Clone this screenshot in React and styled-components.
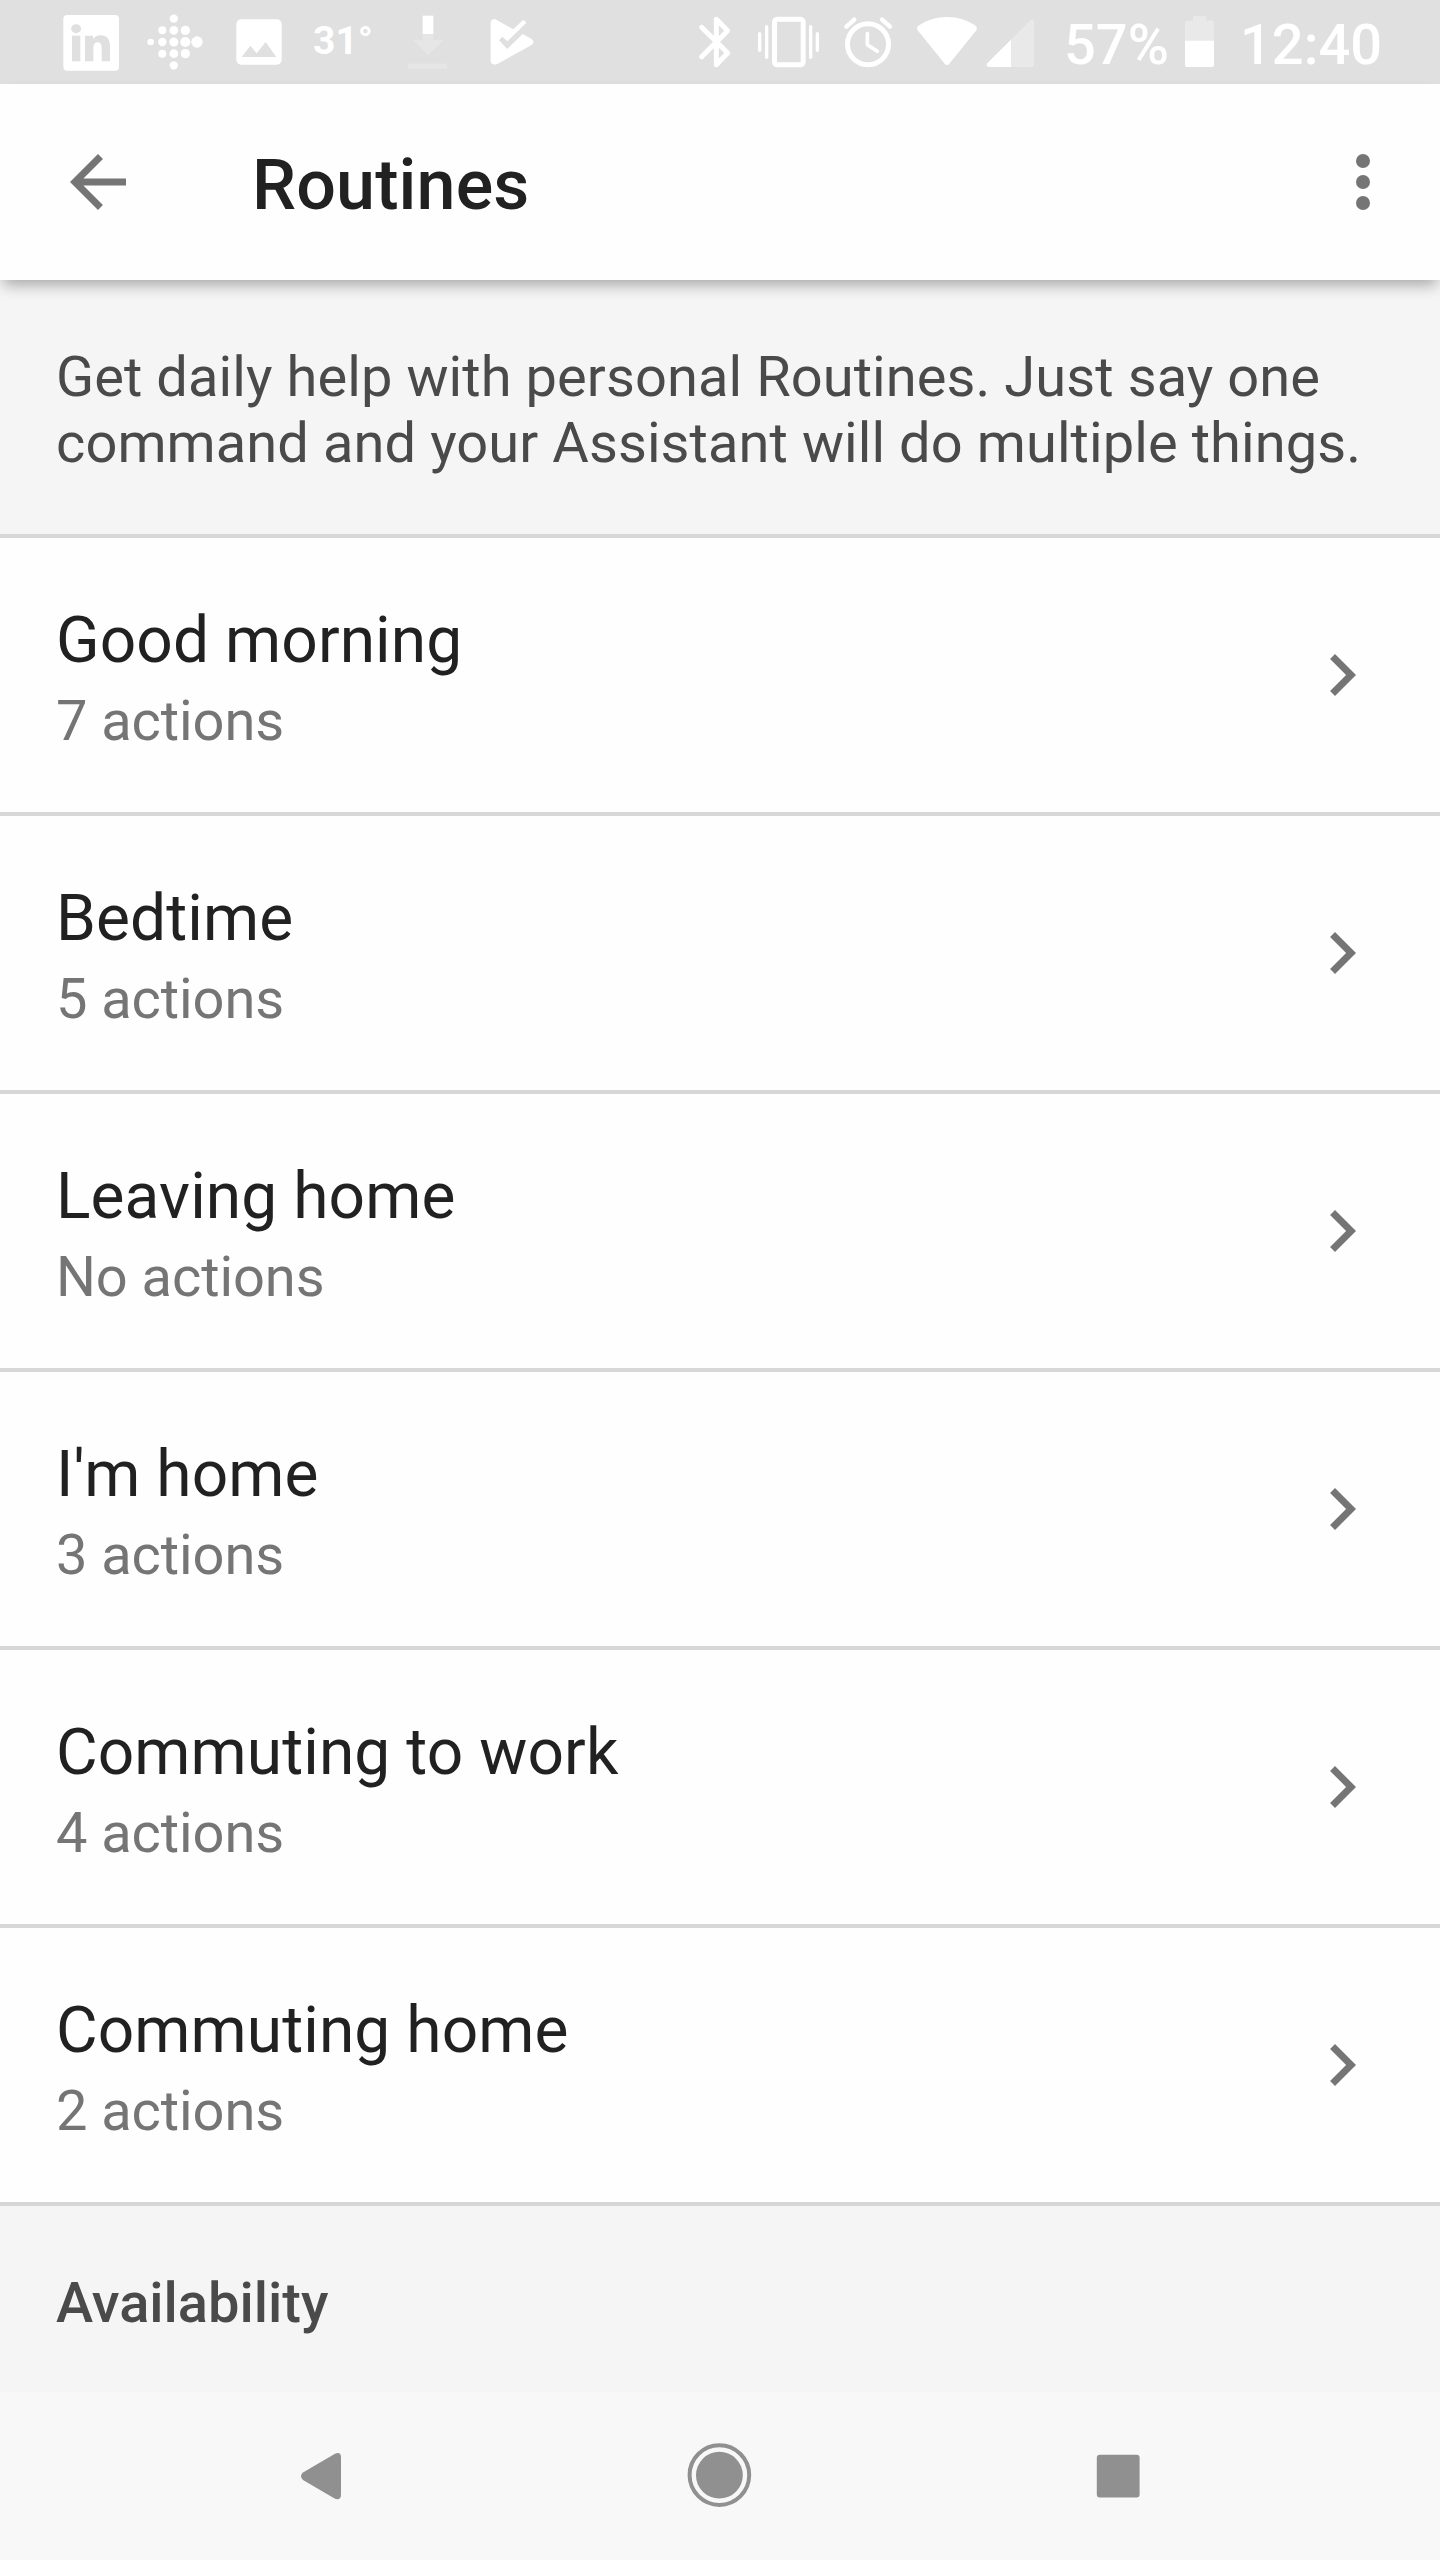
import React from "react";
import styled, { createGlobalStyle } from "styled-components";

const GlobalStyle = createGlobalStyle`
  *, *::before, *::after { box-sizing: border-box; }
  body {
    margin: 0;
    background: #fefefe;
    font-family: Roboto, "Liberation Sans", sans-serif;
  }
`;

const Screen = styled.div`
  display: flex;
  flex-direction: column;
  width: 1440px;
  height: 2560px;
  overflow: hidden;
  background: #fefefe;
`;

const StatusBar = styled.div`
  flex: none;
  display: flex;
  justify-content: space-between;
  height: 84px;
  padding: 0 54px 0 60px;
  background: #e0e0e0;
  color: #fff;
`;

const StatusGroup = styled.div`
  display: flex;
`;

const Glyph = styled.svg`
  flex: none;
  display: block;
  width: ${(p) => p.$w}px;
  height: 84px;
  margin-left: ${(p) => p.$gap || 0}px;
  fill: #fff;
`;

const StatusText = styled.span`
  flex: none;
  width: ${(p) => p.$w}px;
  margin-left: ${(p) => p.$gap}px;
  padding-top: ${(p) => p.$top}px;
  font-size: ${(p) => p.$size}px;
  font-weight: ${(p) => p.$weight || 500};
  line-height: 66px;
  white-space: nowrap;
`;

const Toolbar = styled.header`
  flex: none;
  position: relative;
  z-index: 1;
  display: flex;
  align-items: center;
  height: 196px;
  padding: 0 35px 0 56px;
  background: #fefefe;
  box-shadow: 0 8px 14px -3px rgba(0, 0, 0, 0.32);
`;

const IconButton = styled.button`
  display: block;
  width: 84px;
  height: 84px;
  padding: 0;
  border: 0;
  background: none;
`;

const ActionIcon = styled.svg`
  flex: none;
  display: block;
  width: 84px;
  height: 84px;
  fill: #757575;
`;

const Title = styled.h1`
  flex: 1;
  margin: 0;
  padding: 6px 0 0 112px;
  color: #212121;
  font-size: 70px;
  font-weight: 500;
  letter-spacing: 0.15px;
  line-height: 82px;
`;

const Intro = styled.p`
  flex: none;
  height: 258px;
  margin: 0;
  padding: 64px 0 0 56px;
  border-bottom: 4px solid #d7d7d7;
  background: #f5f5f5;
  color: #4a4a4a;
  font-size: 56px;
  letter-spacing: 0.08px;
  line-height: 66px;
  white-space: nowrap;
`;

const List = styled.ul`
  flex: none;
  margin: 0;
  padding: 0;
  list-style: none;
`;

const Row = styled.li`
  display: flex;
  justify-content: space-between;
  align-items: center;
  height: 278px;
  padding: 0 56px;
  border-bottom: 4px solid #d7d7d7;
`;

const RowText = styled.div`
  display: flex;
  flex-direction: column;
  gap: 10px;
  padding-top: 8px;
`;

const RowTitle = styled.span`
  color: #212121;
  font-size: 64px;
  letter-spacing: 0.1px;
  line-height: 74px;
`;

const RowMeta = styled.span`
  color: #757575;
  font-size: 56px;
  letter-spacing: -0.08px;
  line-height: 66px;
`;

const SectionHeader = styled.h2`
  flex: 1;
  margin: 0;
  padding: 64px 56px 0;
  background: #f5f5f5;
  color: #4a4a4a;
  font-size: 56px;
  font-weight: 500;
  line-height: 66px;
`;

const NavBar = styled.nav`
  flex: none;
  display: flex;
  align-items: center;
  height: 168px;
  padding: 0 122px 0 121px;
  background: #f8f8f8;
`;

const NavButton = styled.div`
  flex: 1;
  display: flex;
  justify-content: center;
`;

const NavIcon = styled.svg`
  display: block;
  width: 83px;
  height: 84px;
  fill: #909090;
`;

const fitbitDots = [
  [332, 126, 10],
  [367, 91, 12], [367, 126, 12.5], [367, 161, 12],
  [401.5, 56, 12.5], [401.5, 91, 13], [401.5, 126, 13.5], [401.5, 161, 13], [401.5, 196, 12.5],
  [436, 91, 14], [436, 126, 15], [436, 161, 14],
  [471, 126, 17],
];

const routines = [
  ["Good morning", "7 actions"],
  ["Bedtime", "5 actions"],
  ["Leaving home", "No actions"],
  ["I'm home", "3 actions"],
  ["Commuting to work", "4 actions"],
  ["Commuting home", "2 actions"],
];

function NotificationIcons() {
  return (
    <StatusGroup>
      <Glyph $w={62} viewBox="60 0 186 252">
        <rect x="70" y="45" width="167" height="167" rx="12" />
        <g fill="#e0e0e0">
          <ellipse cx="108.5" cy="86" rx="15" ry="13.5" />
          <path d="M96 107h25v77H96z" />
          <path d="M135 107h24v11c5-8 13-12 23-12 20 0 28 13 28 34v44h-25v-39c0-11-3-18-12-18s-13 7-13 18v39h-25z" />
        </g>
      </Glyph>
      <Glyph $w={62} $gap={22} viewBox="312 0 186 252">
        {fitbitDots.map(([x, y, r]) => (
          <circle key={`${x}-${y}`} cx={x} cy={y} r={r} />
        ))}
      </Glyph>
      <Glyph $w={50} $gap={28} viewBox="582 0 150 252">
        <rect x="589" y="58" width="136" height="136" rx="15" />
        <path fill="#e0e0e0" d="M605 171l26-34 19 23 27-34 32 45z" />
      </Glyph>
      <StatusText $w={61} $gap={29} $top={8} $size={39} $weight={700}>31°</StatusText>
      <Glyph $w={46} $gap={30} viewBox="102 0 138 252">
        <path d="M158 47h32v55h-32z" />
        <path fill="#e6e6e6" d="M158 102h32v19h31l-46 45-46-45h29zM114 191h117v15H114z" />
      </Glyph>
      <Glyph $w={50} $gap={38} viewBox="354 0 150 252">
        <path d="M362 68Q363 57 375 57L430 88L460 59L469 68L412 124L397 110L387 121L412 147L458 102L485 117Q496 126 485 135L382 192Q364 198 362 183Z" />
      </Glyph>
    </StatusGroup>
  );
}

function SystemIcons() {
  return (
    <StatusGroup>
      <Glyph $w={38} viewBox="48 0 114 252">
        <path
          d="M65 170L143 92L109 58V194L143 159L65 82"
          fill="none" stroke="#fff" strokeWidth="15" strokeLinejoin="round" strokeLinecap="round"
        />
      </Glyph>
      <Glyph $w={66} $gap={22} viewBox="228 0 198 252">
        <rect x="283.5" y="58" width="86" height="136" rx="8" fill="none" stroke="#fff" strokeWidth="15" />
        <path d="M239 101V151M260 80V172M392 80V172M412 101V151" stroke="#fff" strokeWidth="10" strokeLinecap="round" />
      </Glyph>
      <Glyph $w={52} $gap={20} viewBox="486 0 156 252">
        <g fill="none" stroke="#fff" strokeLinecap="round" strokeLinejoin="round">
          <circle cx="564" cy="132.5" r="61.5" strokeWidth="15" />
          <path strokeWidth="11" d="M562 101V134L592 154" />
          <path strokeWidth="13" d="M499 80L523 59M606 59L630 80" />
        </g>
      </Glyph>
      <Glyph $w={66} $gap={20} viewBox="702 0 198 252">
        <path d="M714 78C765 42 837 42 888 78Q893 84 889 91L808 191Q801 199 794 191L713 91Q709 84 714 78Z" />
      </Glyph>
      <Glyph $w={52} $gap={4} viewBox="912 0 156 252">
        <path fill="#e9e9e9" d="M922 190L1050 62Q1062 54 1062 67V195Q1062 201 1056 201H926Q916 198 922 190Z" />
        <path d="M922 190L993 119V201H926Q916 198 922 190Z" />
      </Glyph>
      <StatusText $w={106} $gap={28} $top={12} $size={56}>57%</StatusText>
      <Glyph $w={34} $gap={12} viewBox="426 0 102 252">
        <path fill="#e9e9e9" d="M459 48h39v14h18q6 0 6 6v56h-87V68q0-6 6-6h18z" />
        <path d="M435 122h87v73q0 6-6 6h-75q-6 0-6-6z" />
      </Glyph>
      <StatusText $w={146} $gap={24} $top={12} $size={56}>12:40</StatusText>
    </StatusGroup>
  );
}

export default function App() {
  return (
    <>
      <GlobalStyle />
      <Screen>
        <StatusBar>
          <NotificationIcons />
          <SystemIcons />
        </StatusBar>
        <Toolbar>
          <IconButton aria-label="Back">
            <ActionIcon viewBox="0 0 24 24">
              <path d="M20 11H7.83l5.59-5.59L12 4l-8 8 8 8 1.41-1.41L7.83 13H20v-2z" />
            </ActionIcon>
          </IconButton>
          <Title>Routines</Title>
          <IconButton aria-label="More options">
            <ActionIcon viewBox="0 0 24 24">
              <circle cx="12" cy="6" r="2" />
              <circle cx="12" cy="12" r="2" />
              <circle cx="12" cy="18" r="2" />
            </ActionIcon>
          </IconButton>
        </Toolbar>
        <Intro>
          Get daily help with personal Routines. Just say one
          <br />
          command and your Assistant will do multiple things.
        </Intro>
        <List>
          {routines.map(([name, meta]) => (
            <Row key={name}>
              <RowText>
                <RowTitle>{name}</RowTitle>
                <RowMeta>{meta}</RowMeta>
              </RowText>
              <ActionIcon viewBox="0 0 24 24">
                <path d="M10 6L8.59 7.41 13.17 12l-4.58 4.59L10 18l6-6z" />
              </ActionIcon>
            </Row>
          ))}
        </List>
        <SectionHeader>Availability</SectionHeader>
        <NavBar>
          <NavButton>
            <NavIcon viewBox="0 0 83 84">
              <path d="M24 38.5L56 19.7Q62 17.5 62 23.5V60.5Q62 66.5 56 64.8L24 46Q20 42.2 24 38.5Z" />
            </NavIcon>
          </NavButton>
          <NavButton>
            <NavIcon viewBox="0 0 83 84">
              <circle cx="41.4" cy="41.2" r="23.4" />
              <circle cx="41.4" cy="41.1" r="29.8" fill="none" stroke="#909090" strokeWidth="4" />
            </NavIcon>
          </NavButton>
          <NavButton>
            <NavIcon viewBox="0 0 83 84">
              <rect x="19.8" y="20.7" width="42.8" height="42.8" rx="3" />
            </NavIcon>
          </NavButton>
        </NavBar>
      </Screen>
    </>
  );
}
